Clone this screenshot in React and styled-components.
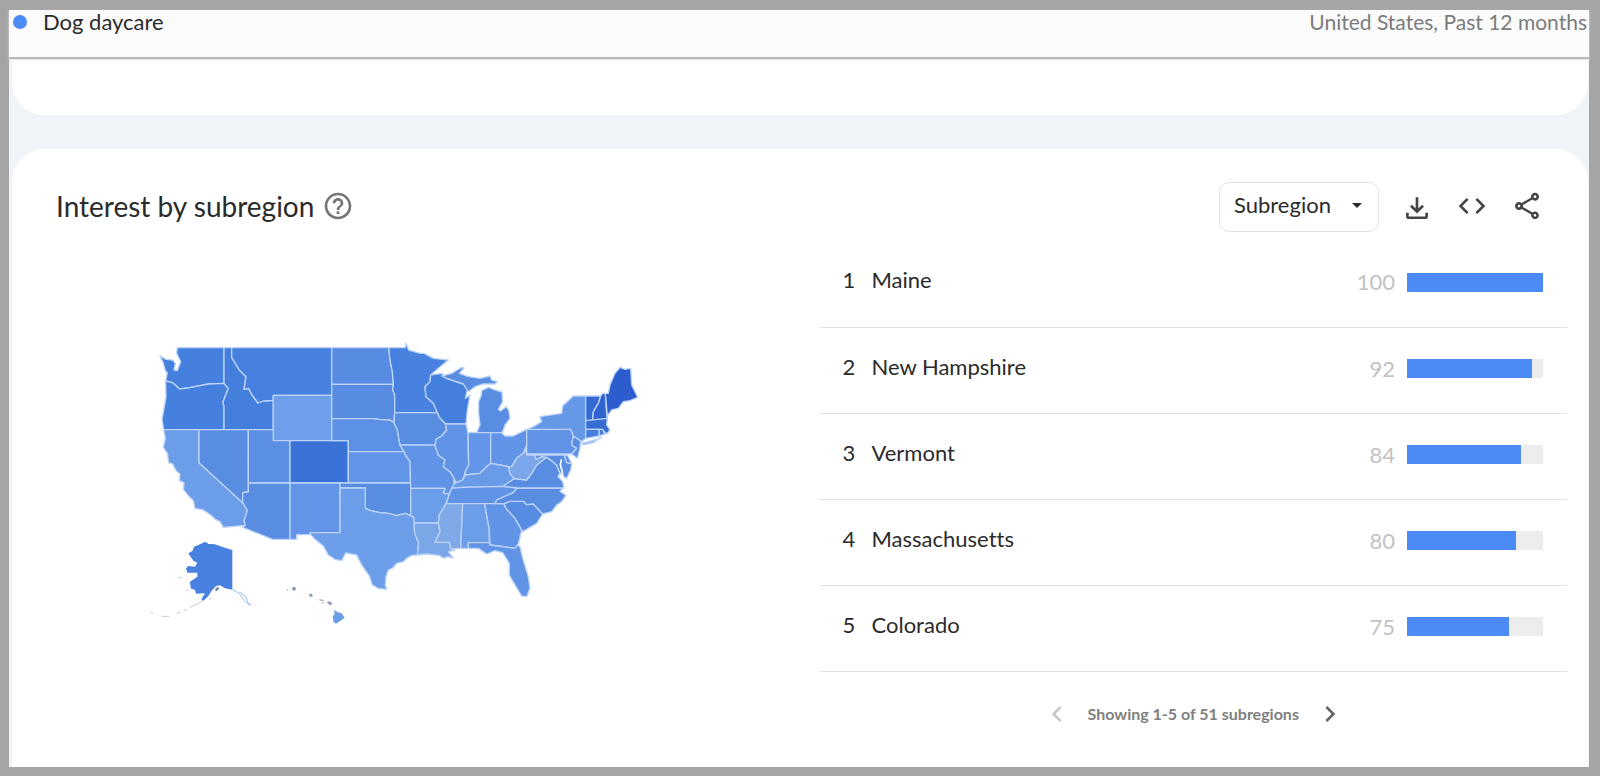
import styled, { createGlobalStyle } from "styled-components";
import {
  MdArrowDropDown,
  MdChevronLeft,
  MdChevronRight,
  MdCode,
  MdHelpOutline,
  MdOutlineShare,
} from "react-icons/md";

const GlobalStyle = createGlobalStyle`
  * {
    box-sizing: border-box;
  }

  body {
    margin: 0;
    font-family: Lato, "Liberation Sans", sans-serif;
    font-variant-ligatures: none;
    color: #2b2b2b;
  }
`;

const Frame = styled.div`
  min-height: 100vh;
  padding: 10px 11px 9px 9px;
  background: #a5a5a5;
  display: flex;
`;

const Page = styled.div`
  flex: 1;
  display: flex;
  flex-direction: column;
  background: #f0f3f8;
`;

const Header = styled.header`
  display: flex;
  justify-content: space-between;
  height: 49px;
  padding: 0 2px 0 4px;
  background: #fbfbfb;
  border-bottom: 2px solid #b9b9b9;
  box-shadow: 0 1px 2px #e4e4e4;
  font-size: 22px;
  line-height: 24px;
  z-index: 1;
`;

const Term = styled.div`
  display: flex;
  align-items: center;
  gap: 16px;
  height: 24px;
`;

const Dot = styled.span`
  width: 14px;
  height: 14px;
  border-radius: 50%;
  background: #4c8bf5;
`;

const Scope = styled.div`
  font-size: 21px;
  color: #7c7c7c;
`;

const PreviousCard = styled.div`
  height: 56px;
  margin: 0 1px 34px 3px;
  border-radius: 0 0 32px 32px;
  background: #fff;
`;

const Card = styled.section`
  flex: 1;
  margin: 0 1px 0 3px;
  padding-top: 33px;
  border-radius: 32px 32px 0 0;
  background: #fff;
`;

const CardHeader = styled.div`
  display: flex;
  align-items: center;
  justify-content: space-between;
  height: 50px;
  padding: 0 41px 0 44px;
`;

const TitleGroup = styled.div`
  display: flex;
  align-items: center;
  gap: 6px;
  padding-bottom: 2px;
`;

const Title = styled.h2`
  margin: 0;
  font-size: 28px;
  line-height: 32px;
  font-weight: 400;
`;

const Tools = styled.div`
  display: flex;
  align-items: center;
  gap: 18px;
`;

const SelectBox = styled.label`
  position: relative;
  display: block;

  svg {
    position: absolute;
    top: 11px;
    right: 10px;
    pointer-events: none;
  }
`;

const Select = styled.select`
  appearance: none;
  width: 160px;
  height: 50px;
  padding: 0 32px 6px 14px;
  border: 1px solid #e2e2e2;
  border-radius: 10px;
  background: #fff;
  color: #2b2b2b;
  font-family: inherit;
  font-size: 22px;
`;

const IconRow = styled.div`
  display: flex;
  gap: 15px;
  padding-bottom: 2px;
`;

const IconButton = styled.button`
  display: flex;
  align-items: center;
  justify-content: center;
  width: ${(props) => props.$size || 40}px;
  height: ${(props) => props.$size || 40}px;
  padding: 0;
  border: 0;
  background: none;
  color: ${(props) => props.$color || "#444"};
  cursor: pointer;

  &:disabled {
    cursor: default;
  }
`;

const Body = styled.div`
  display: grid;
  grid-template-columns: 1fr 1fr;
  gap: 39px;
  padding: 9px 21px 0;
`;

const MapPanel = styled.div`
  display: flex;
  justify-content: center;
  align-items: flex-start;
  padding-top: 89px;

  svg {
    width: 534px;
    max-width: 100%;
  }
`;

const Table = styled.table`
  width: 100%;
  border-collapse: collapse;
  font-size: 22px;
  line-height: 24px;
`;

const Row = styled.tr`
  height: 86px;
  border-bottom: 1px solid #e2e2e2;
`;

const Cell = styled.td`
  width: ${(props) => props.$width || "auto"};
  padding: ${(props) => props.$pad || "0 0 7px"};
  text-align: ${(props) => props.$align || "left"};
  color: ${(props) => props.$color || "#2b2b2b"};
`;

const Track = styled.div`
  height: 19px;
  background: #ededed;
`;

const Fill = styled.div`
  height: 100%;
  background: #4c8bf5;
`;

const Pager = styled.nav`
  display: flex;
  align-items: center;
  justify-content: center;
  gap: 14px;
  padding-top: 25px;
  font-size: 16px;
  line-height: 20px;
  font-weight: 700;
  color: #808080;
`;

const rows = [
  { name: "Maine", value: 100 },
  { name: "New Hampshire", value: 92 },
  { name: "Vermont", value: 84 },
  { name: "Massachusetts", value: 80 },
  { name: "Colorado", value: 75 },
];

const west = [
  ["WA", "#4680de", "60,77 78,88 98,90 106,100 102,120 112,122 122,95 110,70 112,53 252,53 252,160 205,162 150,173 118,177 106,165 95,157 77,153 82,128 76,122 70,100"],
  ["OR", "#4680de", "77,153 95,157 106,165 118,177 150,173 205,162 252,160 265,175 248,218 252,228 252,299 71,299 66,268 72,235 78,200"],
  ["ID", "#457fdd", "252,53 275,53 275,82 298,120 318,140 312,178 326,175 336,195 354,219 370,213 400,211 400,299 252,299 252,228 248,218 265,175 252,160"],
  ["MT", "#4781df", "275,53 575,53 575,196 400,196 400,211 370,213 354,219 336,195 326,175 312,178 318,140 298,120 275,82"],
  ["WY", "#6f9fea", "400,196 575,196 575,332 400,332"],
  ["CA", "#6c9de9", "71,299 177,299 177,398 308,518 322,542 312,572 316,586 250,592 240,575 226,568 212,555 190,540 165,535 160,512 144,496 130,478 132,458 118,452 120,432 108,422 98,402 86,398 82,370 70,352 76,325"],
  ["NV", "#588de2", "177,299 325,299 325,486 308,488 308,518 177,398"],
  ["UT", "#5a8fe3", "325,299 400,299 400,332 450,332 450,459 325,459"],
  ["CO", "#3b72d8", "450,332 625,332 625,459 450,459"],
  ["AZ", "#588de2", "325,459 450,459 450,628 398,628 308,592 316,586 312,572 322,542 308,518 308,488 325,486"],
  ["NM", "#6394e8", "450,459 600,459 600,608 510,608 512,614 470,614 470,628 450,628"],
  ["ND", "#578ce2", "575,53 746,53 750,90 757,125 760,163 575,163"],
  ["SD", "#578ce2", "575,163 760,163 758,180 764,195 764,248 762,278 750,270 716,268 700,266 575,266"],
  ["NE", "#5d91e5", "575,266 700,266 716,268 750,270 762,278 772,300 780,345 792,365 625,365 625,332 575,332"],
  ["KS", "#6295e8", "625,365 792,365 798,378 810,395 812,459 625,459"],
  ["OK", "#588de2", "600,459 812,459 812,557 795,550 770,557 745,550 720,548 692,542 676,535 676,474 600,474"],
  ["TX", "#6c9ee9", "600,474 676,474 676,535 692,542 720,548 745,550 770,557 795,550 812,557 822,562 824,610 836,640 832,675 816,676 800,685 790,695 770,700 758,714 745,720 738,740 736,765 740,778 715,775 697,765 688,738 665,705 650,675 617,669 605,692 585,688 565,675 550,648 525,628 512,614 510,608 600,608"],
];

const east = [
  ["MN", "#4881df", "26,53 75,53 78,40 86,60 120,70 132,70 160,85 205,90 175,115 152,135 150,155 135,170 138,200 160,220 172,248 44,248 44,195 38,180 40,163 37,125 30,90"],
  ["WI", "#457fdd", "152,135 185,130 200,145 250,162 262,180 256,205 270,195 262,240 258,282 196,282 178,262 172,248 160,220 138,200 135,170 150,155"],
  ["MI", "#588de2", "185,138 215,130 245,112 252,114 238,130 265,140 300,145 330,138 335,150 352,155 345,162 310,162 285,170 265,185 262,180 250,162 200,145"],
  ["MI2", "#588de2", "305,182 325,172 345,180 366,186 368,215 355,238 362,243 378,230 386,240 390,265 375,285 370,300 365,308 290,308 300,285 296,250 296,215 304,196"],
  ["IA", "#588de2", "44,248 172,248 178,262 196,282 200,300 185,318 168,328 165,348 60,345 52,300 42,278"],
  ["MO", "#6194e7", "60,345 165,345 175,375 195,390 190,410 210,425 222,445 222,468 215,475 208,492 190,490 195,475 92,475 90,395 78,378 72,365"],
  ["IL", "#6194e7", "196,282 258,282 264,308 266,405 256,425 248,450 228,458 222,445 210,425 190,410 195,390 175,375 165,348 168,328 185,318 200,300"],
  ["IN", "#6395e8", "264,308 290,308 332,308 332,400 318,412 300,430 256,435 256,425 266,405"],
  ["OH", "#6194e7", "332,308 365,308 375,318 400,318 440,298 440,345 430,370 410,385 395,410 385,410 360,405 332,400"],
  ["KY", "#6a9be8", "215,475 222,462 228,458 248,450 256,435 300,430 318,412 332,400 360,405 385,410 390,430 402,446 370,469 250,472"],
  ["TN", "#6194e7", "215,475 250,472 370,469 412,474 400,488 350,510 345,521 198,521 208,492"],
  ["AR", "#6c9de9", "92,475 195,475 190,490 208,492 198,521 178,555 175,579 102,579 102,562 92,557"],
  ["LA", "#7ba6e7", "102,579 175,579 180,605 165,637 208,637 212,655 225,660 205,665 220,685 204,680 190,685 178,676 165,675 140,672 112,675 116,640 104,610"],
  ["MS", "#80a9e7", "198,521 248,521 242,655 212,657 208,637 165,637 180,605 175,579 178,555"],
  ["AL", "#6c9de9", "248,521 314,521 328,600 328,638 264,638 266,655 242,655"],
  ["GA", "#6194e7", "314,521 372,521 378,535 405,565 425,600 418,630 412,652 405,655 330,645 328,600"],
  ["FL", "#6194e7", "264,638 328,638 330,645 405,655 412,645 420,650 428,685 445,740 450,775 440,800 425,798 405,765 388,735 388,700 368,668 345,662 320,672 295,655 266,655"],
  ["SC", "#578ce2", "372,521 390,514 430,514 440,524 460,522 488,552 470,580 428,605 405,565 378,535"],
  ["NC", "#588de2", "412,474 550,474 540,484 558,496 545,515 530,525 515,545 488,552 460,522 440,524 430,514 390,514 372,521 345,521 350,510 400,488"],
  ["VA", "#588de2", "370,469 402,446 440,450 455,430 470,405 500,382 515,392 530,405 540,430 534,440 548,455 552,474 412,474"],
  ["WV", "#7ba6e9", "385,410 395,410 410,385 430,370 438,360 440,375 465,375 468,388 485,380 500,382 470,405 455,430 440,450 402,446 390,430"],
  ["PA", "#6194e7", "440,298 460,298 572,298 580,318 575,345 590,355 575,372 440,372"],
  ["MD", "#588de2", "465,375 553,375 560,398 575,400 572,420 560,445 550,440 538,425 530,405 515,392 500,382 485,380 468,388"],
  ["DE", "#588de2", "553,375 562,375 575,400 560,398"],
  ["NJ", "#588de2", "580,318 602,332 600,355 592,385 575,372 590,355 575,345"],
  ["NY", "#6698e8", "440,298 460,290 485,275 480,260 545,250 548,228 580,198 617,198 617,325 605,335 580,318 572,298"],
  ["LI", "#8fb3ea", "605,340 650,328 665,322 640,338 608,345"],
  ["VT", "#3468d4", "617,198 662,198 655,220 640,245 638,272 617,272"],
  ["NH", "#3062d1", "662,198 668,190 676,190 680,255 682,262 670,272 638,272 640,245 655,220"],
  ["ME", "#2d5ccf", "676,190 685,190 690,165 705,130 720,112 735,118 752,115 755,165 765,185 773,202 750,212 730,215 715,235 695,240 682,258"],
  ["MA", "#376cd5", "617,272 682,265 680,285 690,300 680,312 665,298 617,298"],
  ["CT", "#477fde", "617,298 658,298 658,318 617,325"],
  ["RI", "#477fde", "658,298 668,298 675,312 658,318"],
];

const State = ({ state: [id, color, points] }) => (
  <polygon data-state={id} points={points} fill={color} />
);

const UsMap = () => (
  <svg viewBox="0 0 1602 900" role="img" aria-label="Interest by subregion map">
    <g stroke="#bdd4f7" strokeWidth="4" strokeLinejoin="round">
      {west.map((state) => (
        <State key={state[0]} state={state} />
      ))}
      <g transform="translate(720 0)">
        {east.map((state) => (
          <State key={state[0]} state={state} />
        ))}
        {/* Chesapeake bay */}
        <path d="M544 388L541 404L547 425L549 448" fill="none" stroke="#fff" strokeWidth="5" />
      </g>
    </g>
    {/* Alaska and Hawaii */}
    <g transform="translate(0 570)">
      <polygon
        fill="#4881df"
        points="145,100 158,92 162,80 182,72 195,65 206,72 225,73 250,82 277,90 277,209 255,205 240,196 228,198 215,212 205,228 190,243 184,238 195,220 168,221 165,210 152,205 150,185 172,170 172,158 142,158 138,145 145,138 165,140 172,128 160,122"
      />
      <path d="M190 242L172 252L150 262M143 267l-12 5M122 276l-12 5M88 289l-22 0M40 280l-8-3M115 171l10 3M138 209l8 3M206 238l10-5" fill="none" stroke="#c3cad5" strokeWidth="3" />
      <path d="M227 211l8-8" stroke="#6d7f9c" strokeWidth="7" />
      <path d="M277 209L297 219L310 238L330 257M299 217L318 230L323 247L334 256" fill="none" stroke="#9fc0ec" strokeWidth="3" />
      <g fill="#8c9fb9">
        <circle cx="462" cy="206" r="6" />
        <circle cx="443" cy="210" r="2" />
        <path d="M505 221l10 1 4 6-7 4zM538 238l14 2-2 3-12-2zM560 246l10-2 8 8-9 4zM545 246l7 2-4 3z" />
      </g>
      <polygon fill="#6c9de9" points="582,270 592,276 605,280 614,293 602,302 588,311 581,307 578,290 584,281" />
    </g>
  </svg>
);

const DownloadIcon = () => (
  <svg
    width="32"
    height="32"
    viewBox="0 0 24 24"
    fill="none"
    stroke="currentColor"
    strokeWidth="2"
  >
    <path d="M12 5.5V16M7.5 11.8l4.5 4.5 4.5-4.5" />
    <path d="M4.8 17v2.6q0 1.2 1.2 1.2h12q1.2 0 1.2-1.2V17" />
  </svg>
);

const App = () => {
  return (
    <>
      <GlobalStyle />
      <Frame>
        <Page>
          <Header>
            <Term>
              <Dot />
              Dog daycare
            </Term>
            <Scope>United States, Past 12 months</Scope>
          </Header>
          <PreviousCard />
          <Card>
            <CardHeader>
              <TitleGroup>
                <Title>Interest by subregion</Title>
                <IconButton $size={36} $color="#757575" aria-label="Help">
                  <MdHelpOutline size={32} />
                </IconButton>
              </TitleGroup>
              <Tools>
                <SelectBox>
                  <Select aria-label="Resolution">
                    <option>Subregion</option>
                  </Select>
                  <MdArrowDropDown size={24} />
                </SelectBox>
                <IconRow>
                  <IconButton aria-label="Download">
                    <DownloadIcon />
                  </IconButton>
                  <IconButton aria-label="Embed">
                    <MdCode size={32} />
                  </IconButton>
                  <IconButton aria-label="Share">
                    <MdOutlineShare size={32} />
                  </IconButton>
                </IconRow>
              </Tools>
            </CardHeader>
            <Body>
              <MapPanel>
                <UsMap />
              </MapPanel>
              <div>
                <Table>
                  <tbody>
                    {rows.map((row, index) => (
                      <Row key={row.name}>
                        <Cell $width="52px" $pad="0 0 7px 23px">
                          {index + 1}
                        </Cell>
                        <Cell>{row.name}</Cell>
                        <Cell $width="60px" $align="right" $color="#c2c2c2" $pad="0 0 3px">
                          {row.value}
                        </Cell>
                        <Cell $width="172px" $pad="0 24px 3px 12px">
                          <Track>
                            <Fill style={{ width: `${row.value}%` }} />
                          </Track>
                        </Cell>
                      </Row>
                    ))}
                  </tbody>
                </Table>
                <Pager aria-label="Subregion pages">
                  <IconButton $size={34} $color="#c9c9c9" aria-label="Previous" disabled>
                    <MdChevronLeft size={32} />
                  </IconButton>
                  Showing 1-5 of 51 subregions
                  <IconButton $size={34} $color="#666" aria-label="Next">
                    <MdChevronRight size={32} />
                  </IconButton>
                </Pager>
              </div>
            </Body>
          </Card>
        </Page>
      </Frame>
    </>
  );
};

export default App;
